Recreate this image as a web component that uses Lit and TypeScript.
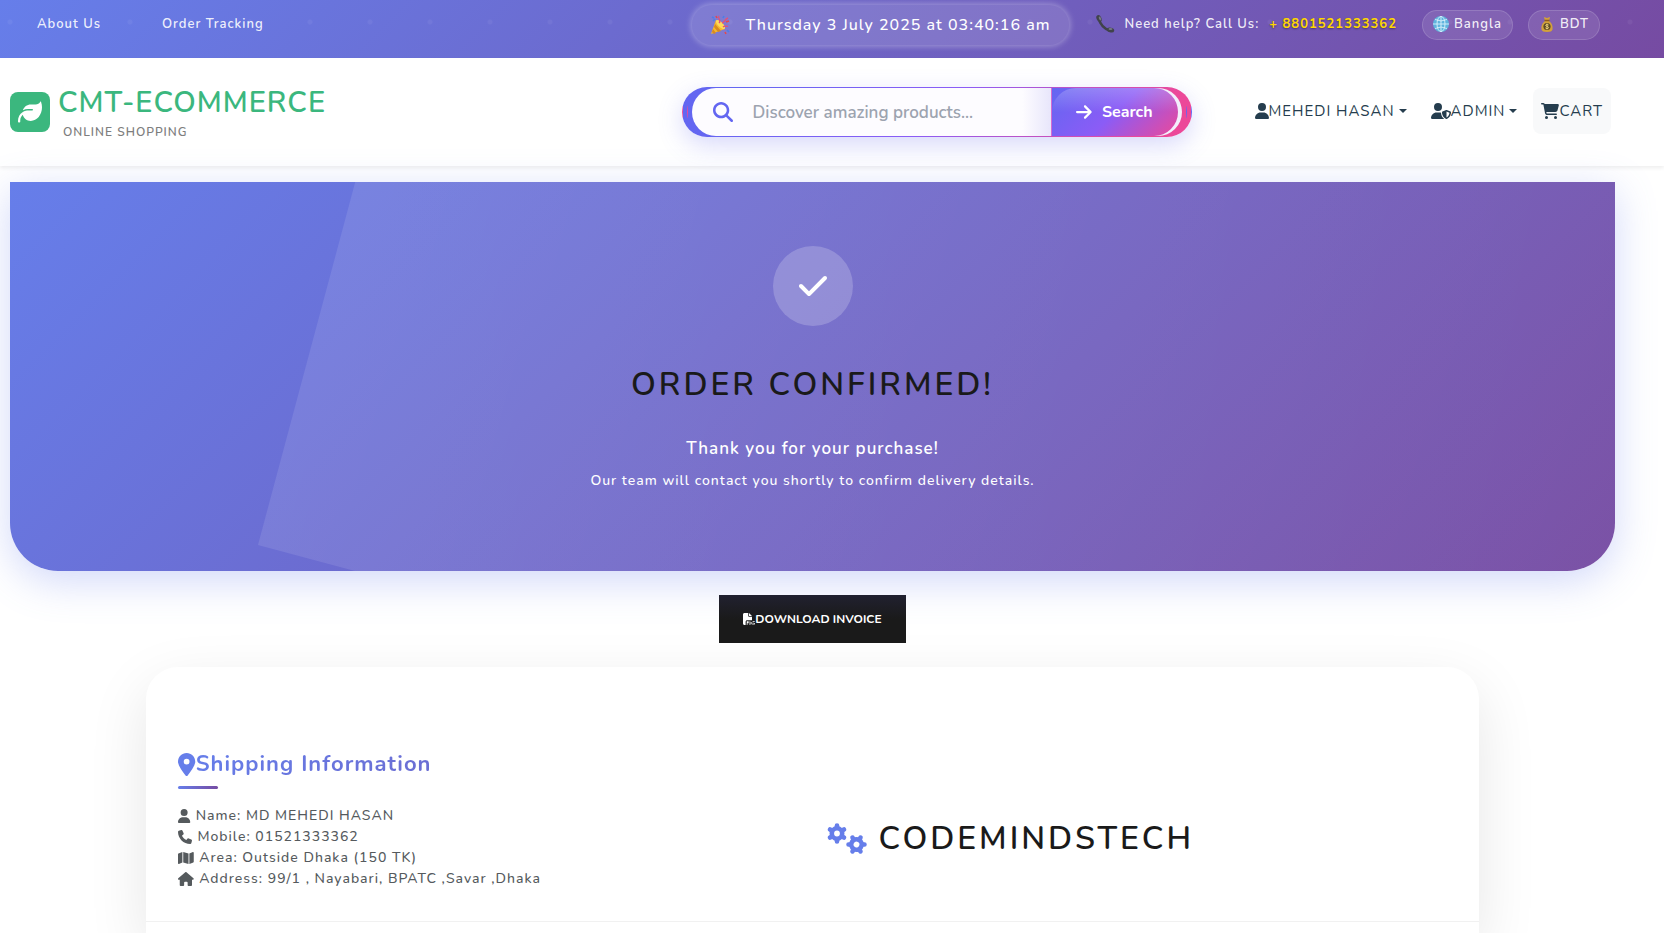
import { LitElement, html, css, svg } from "lit";
import { customElement, property } from "lit/decorators.js";

const icons: Record<string, { box: string; shape: unknown }> = {
  user: {
    box: "0 0 448 512",
    shape: svg`<path d="M224 256A128 128 0 1 0 224 0a128 128 0 1 0 0 256zm-45.7 48C79.8 304 0 383.8 0 482.3C0 498.7 13.3 512 29.7 512H418.3c16.4 0 29.7-13.3 29.7-29.7C448 383.8 368.2 304 269.7 304H178.3z"/>`,
  },
  shield: {
    box: "0 0 640 512",
    shape: svg`<path d="M224 256A128 128 0 1 0 224 0a128 128 0 1 0 0 256zm-45.7 48C79.8 304 0 383.8 0 482.3C0 498.7 13.3 512 29.7 512H418.3c1.8 0 3.5-.2 5.3-.5c-76.3-55.1-99.8-141-103.1-200.2c-16.1-4.8-33.1-7.3-50.7-7.3H178.3zm308.8-78.3l-120 48C358 277.4 352 286.2 352 296c0 63.3 25.9 168.8 134.8 214.2c5.9 2.5 12.6 2.5 18.5 0C614.1 464.8 640 359.3 640 296c0-9.8-6-18.6-15.1-22.3l-120-48c-5.7-2.3-12.1-2.3-17.8 0zM591.4 312c-3.9 50.7-27.2 116.7-95.4 149.7V273.8L591.4 312z"/>`,
  },
  cart: {
    box: "0 0 576 512",
    shape: svg`<path d="M0 24C0 10.7 10.7 0 24 0H69.5c22 0 41.5 12.8 50.6 32h411c26.3 0 45.5 25 38.6 50.4l-41 152.3c-8.5 31.4-37 53.3-69.5 53.3H170.7l5.4 28.5c2.2 11.3 12.1 19.5 23.6 19.5H488c13.3 0 24 10.7 24 24s-10.7 24-24 24H199.7c-34.6 0-64.3-24.6-70.7-58.5L77.4 54.5c-.7-3.8-4-6.5-7.9-6.5H24C10.7 48 0 37.3 0 24zM128 464a48 48 0 1 1 96 0 48 48 0 1 1 -96 0zm336-48a48 48 0 1 1 0 96 48 48 0 1 1 0-96z"/>`,
  },
  phone: {
    box: "0 0 512 512",
    shape: svg`<path d="M164.9 24.6c-7.7-18.6-28-28.5-47.4-23.2l-88 24C12.1 30.2 0 46 0 64C0 311.4 200.6 512 448 512c18 0 33.8-12.1 38.6-29.5l24-88c5.3-19.4-4.6-39.7-23.2-47.4l-96-40c-16.3-6.8-35.2-2.1-46.3 11.6L304.7 368C234.3 334.7 177.3 277.7 144 207.3L193.3 167c13.7-11.2 18.4-30 11.6-46.3l-40-96z"/>`,
  },
  map: {
    box: "0 0 576 512",
    shape: svg`<path d="M384 476.1L192 421.2V35.9L384 90.8V476.1zm32-1.2V88.4L543.1 37.5c15.8-6.3 32.9 5.3 32.9 22.3V394.6c0 9.8-6 18.6-15.1 22.3L416 474.8zM15.1 95.1L160 37.2V423.6L32.9 474.5C17.1 480.8 0 469.2 0 452.2V117.4c0-9.8 6-18.6 15.1-22.3z"/>`,
  },
  home: {
    box: "0 0 576 512",
    shape: svg`<path d="M575.8 255.5c0 18-15 32.1-32 32.1h-32l.7 160.2c0 2.7-.2 5.4-.5 8.1V472c0 22.1-17.9 40-40 40H456c-1.1 0-2.2 0-3.3-.1c-1.4 .1-2.8 .1-4.2 .1H416 392c-22.1 0-40-17.9-40-40V448 384c0-17.7-14.3-32-32-32H256c-17.7 0-32 14.3-32 32v64 24c0 22.1-17.9 40-40 40H160 128.1c-1.5 0-3-.1-4.5-.2c-1.2 .1-2.4 .2-3.6 .2H104c-22.1 0-40-17.9-40-40V360c0-.9 0-1.9 .1-2.8V287.6H32c-18 0-32-14-32-32.1c0-9 3-17 10-24L266.4 8c7-7 15-8 22-8s15 2 21 7L564.8 231.5c8 7 12 15 11 24z"/>`,
  },
  pin: {
    box: "0 0 384 512",
    shape: svg`<path d="M215.7 499.2C267 435 384 279.4 384 192C384 86 298 0 192 0S0 86 0 192c0 87.4 117 243 168.3 307.2c12.3 15.3 35.1 15.3 47.4 0zM192 128a64 64 0 1 1 0 128 64 64 0 1 1 0-128z"/>`,
  },
  search: {
    box: "0 0 512 512",
    shape: svg`<path d="M416 208c0 45.9-14.9 88.3-40 122.7L502.6 457.4c12.5 12.5 12.5 32.8 0 45.3s-32.8 12.5-45.3 0L330.7 376c-34.4 25.2-76.8 40-122.7 40C93.1 416 0 322.9 0 208S93.1 0 208 0S416 93.1 416 208zM208 352a144 144 0 1 0 0-288 144 144 0 1 0 0 288z"/>`,
  },
  arrow: {
    box: "0 0 448 512",
    shape: svg`<path d="M438.6 278.6c12.5-12.5 12.5-32.8 0-45.3l-160-160c-12.5-12.5-32.8-12.5-45.3 0s-12.5 32.8 0 45.3L338.8 224 32 224c-17.7 0-32 14.3-32 32s14.3 32 32 32l306.7 0L233.4 393.4c-12.5 12.5-12.5 32.8 0 45.3s32.8 12.5 45.3 0l160-160z"/>`,
  },
  check: {
    box: "0 0 448 512",
    shape: svg`<path d="M438.6 105.4c12.5 12.5 12.5 32.8 0 45.3l-256 256c-12.5 12.5-32.8 12.5-45.3 0l-128-128c-12.5-12.5-12.5-32.8 0-45.3s32.8-12.5 45.3 0L160 338.7 393.4 105.4c12.5-12.5 32.8-12.5 45.3 0z"/>`,
  },
  leaf: {
    box: "0 0 512 512",
    shape: svg`<path d="M272 96c-78.6 0-145.1 51.5-167.7 122.5c33.6-17 71.5-26.5 111.7-26.5h88c8.8 0 16 7.2 16 16s-7.2 16-16 16H216c-16.6 0-32.7 1.9-48.3 5.4c-25.9 5.9-49.9 16.4-71.4 30.7C38.3 298.8 0 364.9 0 440v16c0 13.3 10.7 24 24 24s24-10.7 24-24V440c0-48.7 20.7-92.5 53.8-123.2C121.6 392.3 190.3 448 272 448l1 0c132.1-.7 239-130.9 239-291.4c0-42.6-7.5-83.1-21.1-119.6c-2.6-6.9-12.7-6.6-16.2-.1C455.9 72.1 418.7 96 376 96L272 96z"/>`,
  },
  file: {
    box: "0 0 512 512",
    shape: svg`<path d="M0 64C0 28.7 28.7 0 64 0H224V128c0 17.7 14.3 32 32 32H384V304H176c-35.3 0-64 28.7-64 64V512H64c-35.3 0-64-28.7-64-64V64zm384 64H256V0L384 128z"/><path d="M160 352h80v80h-50v80h-30zM280 352h30v160h-30zM330 384h36v100h-36zM410 352h90v34h-90zM410 410h34v100h-34zM466 430h36v60h-36z"/>`,
  },
  gears: {
    box: "0 0 40 32",
    shape: svg`
      <g fill="none" stroke="currentColor">
        <g transform="translate(10 10.5)">
          <circle r="5.2" stroke-width="4.6"/>
          <path stroke-width="4.6" stroke-linecap="round" d="M0-6V-8M5.2-3L6.9-4M5.2 3L6.9 4M0 6V8M-5.2 3L-6.9 4M-5.2-3L-6.9-4"/>
        </g>
        <g transform="translate(29.5 21.5) rotate(30)">
          <circle r="5.2" stroke-width="4.6"/>
          <path stroke-width="4.6" stroke-linecap="round" d="M0-6V-8M5.2-3L6.9-4M5.2 3L6.9 4M0 6V8M-5.2 3L-6.9 4M-5.2-3L-6.9-4"/>
        </g>
      </g>`,
  },
};

@customElement("ui-icon")
class UiIcon extends LitElement {
  @property() name = "user";
  static styles = css`
    :host { display: inline-flex; flex: none; height: 16px; }
    svg { display: block; height: 100%; fill: currentColor; }
  `;
  render() {
    const icon = icons[this.name];
    return html`<svg viewBox=${icon.box} aria-hidden="true">${icon.shape}</svg>`;
  }
}

@customElement("app-root")
class AppRoot extends LitElement {
  static styles = css`
    :host {
      display: flex;
      flex-direction: column;
      height: 100vh;
      overflow: hidden;
      background: #fff;
      color: #1a1a1a;
      font-family: Nunito, Lato, "Open Sans", sans-serif;
      letter-spacing: 1px;
      --indigo: #667eea;
      --violet: #764ba2;
      --accent: linear-gradient(135deg, #6366f1 10%, #8b5cf6 50%, #ec4899 90%);
    }
    *, *::before, *::after { box-sizing: border-box; }
    a { color: inherit; text-decoration: none; }
    button { font: inherit; letter-spacing: inherit; color: inherit; border: 0; background: none; cursor: pointer; }
    h1, h2, p, ul { margin: 0; padding: 0; }

    .topbar {
      flex: none;
      display: flex;
      align-items: center;
      height: 58px;
      padding: 0 64px 8px 37px;
      font-size: 13px;
      font-weight: 600;
      line-height: 20px;
      color: rgba(255, 255, 255, 0.9);
      background:
        radial-gradient(circle at 10px 22px, rgba(255, 255, 255, 0.05) 2px, transparent 3px) 0 0 / 60px 60px,
        linear-gradient(135deg, var(--indigo), var(--violet));
    }
    .links, .help { padding-bottom: 2px; }
    .links { display: flex; gap: 61px; margin-right: auto; }
    .clock {
      display: flex;
      align-items: center;
      gap: 16px;
      height: 40px;
      margin-right: 26px;
      padding: 0 18px;
      border-radius: 20px;
      font-size: 16px;
      color: #fff;
      background: rgba(255, 255, 255, 0.13);
      box-shadow: 0 0 6px 1px rgba(255, 255, 255, 0.35);
    }
    .clock span { font-weight: 500; }
    .help { display: flex; gap: 10px; margin-right: 25px; align-items: center; }
    .emoji { width: 20px; height: 20px; flex: none; }
    .number { font-weight: 700; color: #ffd700; text-shadow: 0 1px 2px rgba(0, 0, 0, 0.4); }
    .pills { display: flex; gap: 15px; }
    .pill {
      display: flex;
      align-items: center;
      gap: 5px;
      height: 30px;
      padding: 0 10px 2px;
      border: 1px solid rgba(255, 255, 255, 0.15);
      border-radius: 15px;
      background: rgba(255, 255, 255, 0.1);
    }
    .pill .emoji { width: 16px; height: 16px; }

    .header {
      flex: none;
      display: grid;
      grid-template-columns: 1fr 510px auto;
      align-items: center;
      gap: 55px;
      height: 108px;
      padding: 0 53px 0 10px;
      box-shadow: 0 2px 4px rgba(0, 0, 0, 0.07);
    }
    .logo { display: flex; align-items: center; gap: 8px; color: #3bb77e; }
    .leaf {
      display: grid;
      place-items: center;
      width: 40px;
      height: 40px;
      border-radius: 8px;
      color: #fff;
      background: #3bb77e;
    }
    .leaf ui-icon { height: 24px; }
    .brand { display: block; padding-top: 4px; font-size: 29px; font-weight: 600; line-height: 36px; }
    .tagline { display: block; padding-left: 5px; font-size: 12px; font-weight: 600; line-height: 22px; color: #7e7e7e; }

    .search {
      display: flex;
      height: 50px;
      padding: 1px 4px;
      border: 0 solid transparent;
      border-width: 0 1px;
      border-radius: 25px;
      letter-spacing: 0;
      background: var(--accent);
      box-shadow: 0 8px 25px rgba(99, 102, 241, 0.25);
    }
    .ring {
      display: flex;
      flex: 1;
      min-width: 0;
      padding: 0 4px;
      border: 0 solid transparent;
      border-width: 0 1px;
      border-radius: 25px;
      background: var(--accent);
    }
    .field {
      display: flex;
      flex: 1;
      align-items: center;
      gap: 20px;
      min-width: 0;
      padding-left: 21px;
      border-radius: 25px 0 0 25px;
      color: #6366f1;
      background: linear-gradient(90deg, #fdfcff 92%, #e8e6fb);
    }
    .field ui-icon { height: 20px; }
    .field input {
      flex: 1;
      min-width: 0;
      height: 40px;
      padding: 0;
      border: 0;
      outline: 0;
      font: 600 17px Nunito, Lato, sans-serif;
      color: #374151;
      background: none;
    }
    .field input::placeholder { color: #9ca3af; opacity: 1; }
    .cap { display: flex; border-radius: 0 25px 25px 0; background: #f3eefc; }
    .go {
      position: relative;
      z-index: 0;
      display: flex;
      align-items: center;
      gap: 10px;
      padding: 0 25px 0 24px;
      margin-right: 4px;
      border-radius: 0 25px 25px 0;
      border-left: 1px solid #d66bd0;
      font-size: 16px;
      font-weight: 700;
      color: #fff;
      background: linear-gradient(135deg, #6366f1, #8b5cf6 50%, #ec4899);
    }
    .go::before {
      content: "";
      position: absolute;
      inset: 0;
      z-index: -1;
      border-radius: 25px;
      background: linear-gradient(180deg, rgba(255, 255, 255, 0.22), transparent 50%);
    }
    .go ui-icon { height: 18px; }

    .nav { display: flex; gap: 8px; margin-bottom: 2px; font-size: 15px; line-height: 20px; color: #253d4e; list-style: none; }
    .item { display: flex; align-items: center; height: 46px; padding: 0 8px; border-radius: 8px; }
    .boxed { background: #f8f9fa; }
    .caret { margin-left: 4px; border: 4px solid transparent; border-top-color: currentColor; border-bottom: 0; }

    .main {
      flex: 1;
      display: flex;
      flex-direction: column;
      align-items: center;
      gap: 24px;
      padding: 16px 49px 0 10px;
    }
    .hero {
      position: relative;
      z-index: 0;
      flex: none;
      align-self: stretch;
      display: flex;
      flex-direction: column;
      align-items: center;
      height: 389px;
      padding-top: 64px;
      border-radius: 0 0 48px 48px;
      background: linear-gradient(135deg, var(--indigo), var(--violet));
      box-shadow: 0 10px 40px rgba(102, 126, 234, 0.3);
      color: #fff;
      text-align: center;
    }
    .sheen { position: absolute; inset: 0; z-index: -1; overflow: hidden; border-radius: inherit; }
    .sheen::before {
      content: "";
      position: absolute;
      left: 248px;
      bottom: 26px;
      width: 120%;
      height: 200%;
      transform: rotate(15deg);
      transform-origin: 0 100%;
      background: linear-gradient(90deg, rgba(255, 255, 255, 0.1), rgba(255, 255, 255, 0.02) 85%);
    }
    .badge {
      display: grid;
      place-items: center;
      width: 80px;
      height: 80px;
      border-radius: 50%;
      background: rgba(255, 255, 255, 0.2);
    }
    .badge ui-icon { height: 32px; }
    .hero h1 { margin: 39px 0 30px; font-size: 32px; font-weight: 600; line-height: 40px; letter-spacing: 3px; color: #1a1a1a; }
    .thanks { font-size: 17px; font-weight: 600; line-height: 28px; }
    .note { margin-top: 6px; font-size: 14px; font-weight: 500; line-height: 24px; }

    .download {
      flex: none;
      display: flex;
      align-items: center;
      height: 48px;
      padding: 0 24px;
      font-size: 12px;
      font-weight: 700;
      letter-spacing: 0;
      color: #fff;
      background: linear-gradient(#212130, #1a1a1a 50%);
      position: relative;
    }
    .download ui-icon { height: 12px; }

    .card {
      flex: 1 0 auto;
      width: 83%;
      border-radius: 32px 32px 0 0;
      background: #fff;
      box-shadow: 0 20px 60px rgba(0, 0, 0, 0.1);
    }
    .info {
      display: grid;
      grid-template-columns: 1fr 1fr;
      height: 255px;
      padding: 80px 32px 0;
      border-bottom: 1px solid #f1f1f1;
    }
    .title { display: flex; align-items: center; font-size: 22px; font-weight: 700; line-height: 34px; }
    .title span {
      color: transparent;
      background: linear-gradient(135deg, var(--indigo), var(--violet) 300%);
      background-clip: text;
    }
    .title ui-icon { height: 23px; color: var(--indigo); }
    .rule { width: 40px; height: 3px; margin: 5px 0 16px; border-radius: 2px; background: linear-gradient(90deg, var(--indigo), var(--violet)); }
    .details { list-style: none; font-size: 14px; font-weight: 500; line-height: 21px; color: #555a5d; }
    .details li { display: flex; align-items: center; gap: 5px; }
    .details ui-icon { height: 14px; }
    .company { display: flex; align-items: center; gap: 11px; height: 184px; padding-left: 15px; font-size: 32px; font-weight: 600; line-height: 40px; letter-spacing: 3px; }
    .company ui-icon { height: 32px; color: var(--indigo); }
  `;

  private details: [string, string][] = [
    ["user", "Name: MD MEHEDI HASAN"],
    ["phone", "Mobile: 01521333362"],
    ["map", "Area: Outside Dhaka (150 TK)"],
    ["home", "Address: 99/1 , Nayabari, BPATC ,Savar ,Dhaka"],
  ];

  render() {
    return html`
      <div class="topbar">
        <nav class="links">
          <a href="#about">About Us</a>
          <a href="#tracking">Order Tracking</a>
        </nav>
        <div class="clock">
          <svg class="emoji" viewBox="0 0 20 20" aria-hidden="true">
            <path d="M6 5l9 9L1 19z" fill="#f5b82e"/>
            <path d="M5 9l6 7-3 1-4-5zM3 14l3 4-2 1-2-2z" fill="#d98a1f"/>
            <ellipse cx="10.5" cy="9.5" rx="6" ry="2.4" transform="rotate(45 10.5 9.5)" fill="#ffd95a"/>
            <path d="M9 8C12 6 7 3 9 1M12 8c3-1 3-4 6-5M13 12c2-2 4 0 5-1" fill="none" stroke="#e0527a" stroke-width="1.4"/>
            <path d="M2 2l2 1M3 6l2-2M13 3l1-2M17 15l2 2" stroke="#4a7fe8" stroke-width="1.6"/>
            <path d="M6 1l1 2M16 7l3-1M15 17l1 2" stroke="#e5484d" stroke-width="1.6"/>
          </svg>
          <span>Thursday 3 July 2025 at 03:40:16 am</span>
        </div>
        <div class="help">
          <svg class="emoji" viewBox="0 0 20 20" aria-hidden="true">
            <path d="M3.5 4C5 10 9 15 15.5 17" fill="none" stroke="#40434b" stroke-width="2.6"/>
            <ellipse cx="4" cy="4.5" rx="2.4" ry="3.6" transform="rotate(-25 4 4.5)" fill="#40434b"/>
            <ellipse cx="15.5" cy="16" rx="3.8" ry="2.4" transform="rotate(15 15.5 16)" fill="#40434b"/>
            <ellipse cx="5" cy="4.5" rx="1" ry="2" transform="rotate(-25 5 4.5)" fill="#757984"/>
            <ellipse cx="15.5" cy="15" rx="2" ry="1" fill="#757984"/>
          </svg>
          <span>Need help? Call Us:</span>
          <a class="number" href="tel:+8801521333362">+ 8801521333362</a>
        </div>
        <div class="pills">
          <button class="pill">
            <svg class="emoji" viewBox="0 0 16 16" aria-hidden="true">
              <circle cx="8" cy="8" r="8" fill="#5fb4de"/>
              <path d="M8 0v16M0 8h16M2 3.5q6 3 12 0M2 12.5q6-3 12 0" fill="none" stroke="#d9f0fa" stroke-width=".9"/>
              <ellipse cx="8" cy="8" rx="4" ry="7.6" fill="none" stroke="#d9f0fa" stroke-width=".9"/>
            </svg>
            Bangla
          </button>
          <button class="pill">
            <svg class="emoji" viewBox="0 0 16 16" aria-hidden="true">
              <path d="M5 1l3 1 3-1-1 4c3 2 4 5 3.5 8.5Q13 16 8 16t-5.500-2.500C2 10 3 7 6 5z" fill="#d2a13a"/>
              <path d="M5.5 4.5h5" stroke="#8d5a1e" stroke-width="1.5"/>
              <circle cx="8" cy="10.5" r="3.6" fill="#5c4a24"/>
              <path d="M9.6 9q-3-1.200-3 .3c0 1.400 3 .8 3 2.300s-3 1-3.200.2M8 7.600v5.800" fill="none" stroke="#f4d77a" stroke-width=".9"/>
            </svg>
            BDT
          </button>
        </div>
      </div>

      <header class="header">
        <a class="logo" href="#home">
          <span class="leaf"><ui-icon name="leaf"></ui-icon></span>
          <span>
            <span class="brand">CMT-ECOMMERCE</span>
            <span class="tagline">ONLINE SHOPPING</span>
          </span>
        </a>
        <form class="search" @submit=${(e: Event) => e.preventDefault()}>
          <div class="ring">
            <label class="field">
              <ui-icon name="search"></ui-icon>
              <input type="text" placeholder="Discover amazing products..." aria-label="Search products" />
            </label>
            <div class="cap">
              <button class="go"><ui-icon name="arrow"></ui-icon>Search</button>
            </div>
          </div>
        </form>
        <nav class="nav">
          <a class="item" href="#account"><ui-icon name="user"></ui-icon>MEHEDI HASAN<span class="caret"></span></a>
          <a class="item" href="#admin"><ui-icon name="shield"></ui-icon>ADMIN<span class="caret"></span></a>
          <a class="item boxed" href="#cart"><ui-icon name="cart"></ui-icon>CART</a>
        </nav>
      </header>

      <main class="main">
        <section class="hero">
          <div class="sheen"></div>
          <div class="badge"><ui-icon name="check"></ui-icon></div>
          <h1>ORDER CONFIRMED!</h1>
          <p class="thanks">Thank you for your purchase!</p>
          <p class="note">Our team will contact you shortly to confirm delivery details.</p>
        </section>
        <button class="download"><ui-icon name="file"></ui-icon>DOWNLOAD INVOICE</button>
        <section class="card">
          <div class="info">
            <div>
              <h2 class="title"><ui-icon name="pin"></ui-icon><span>Shipping Information</span></h2>
              <div class="rule"></div>
              <ul class="details">
                ${this.details.map(([icon, text]) => html`<li><ui-icon name=${icon}></ui-icon>${text}</li>`)}
              </ul>
            </div>
            <div class="company"><ui-icon name="gears"></ui-icon>CODEMINDSTECH</div>
          </div>
        </section>
      </main>
    `;
  }
}
